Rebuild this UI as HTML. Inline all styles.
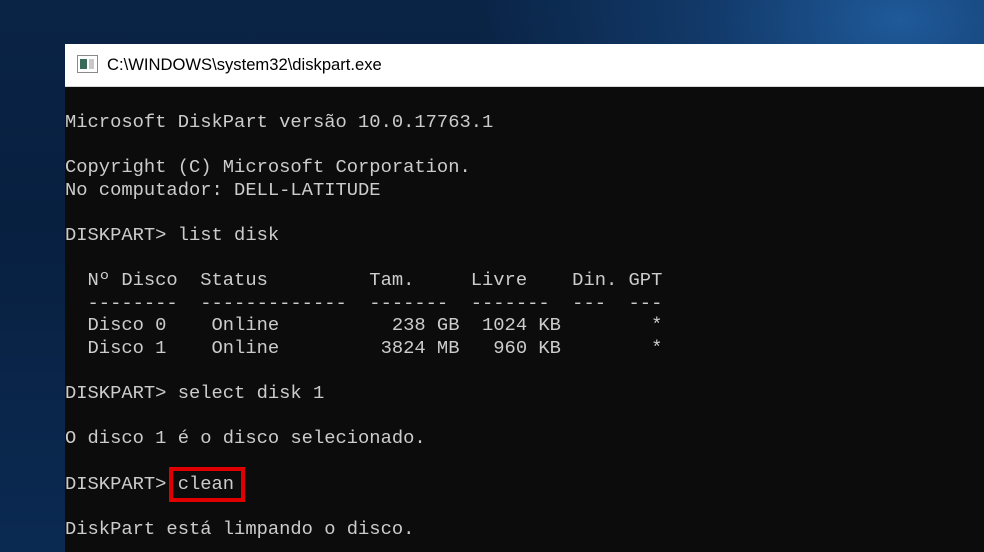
<!DOCTYPE html>
<html><head><meta charset="utf-8"><style>
html,body{margin:0;padding:0}
body{width:984px;height:552px;overflow:hidden;position:relative;
background:radial-gradient(ellipse 420px 260px at 900px 20px,#1f5a9a 0%,#123a6a 45%,transparent 100%),linear-gradient(180deg,#0a2446 0%,#082040 40%,#0b2a52 100%);}
.win{position:absolute;left:65px;top:44px;width:919px;height:508px;background:#0c0c0c;}
.title{height:42px;background:#fff;border-bottom:1px solid #d8d8d8;position:relative;font-family:"Liberation Sans",sans-serif;font-size:16.6px;color:#000;}
.title span{position:absolute;left:42px;top:11px}
.ico{position:absolute;left:12px;top:11px;width:19px;height:16px;border:1px solid #8a8a8a;background:#fff}
.ico i{position:absolute;left:2px;top:3px;width:7px;height:10px;background:#3a6a5a}
.ico b{position:absolute;left:11px;top:3px;width:5px;height:10px;background:#c8c8c8}
pre{margin:0;position:absolute;left:0;top:67px;font-family:"Liberation Mono",monospace;font-size:18.8px;line-height:22.6px;color:#cccccc;}
.box{position:absolute;left:104px;top:421px;width:68px;height:27px;border:4px solid #e00000}
</style></head><body>
<div class="win">
<div class="title"><div class="ico"><i></i><b></b></div><span>C:\WINDOWS\system32\diskpart.exe</span></div>
<pre>Microsoft DiskPart versão 10.0.17763.1

Copyright (C) Microsoft Corporation.
No computador: DELL-LATITUDE

DISKPART&gt; list disk

  Nº Disco  Status         Tam.     Livre    Din. GPT
  --------  -------------  -------  -------  ---  ---
  Disco 0    Online          238 GB  1024 KB        *
  Disco 1    Online         3824 MB   960 KB        *

DISKPART&gt; select disk 1

O disco 1 é o disco selecionado.

DISKPART&gt; clean

DiskPart está limpando o disco.</pre>
<div class="box" style="top:423px"></div>
</div>
</body></html>
